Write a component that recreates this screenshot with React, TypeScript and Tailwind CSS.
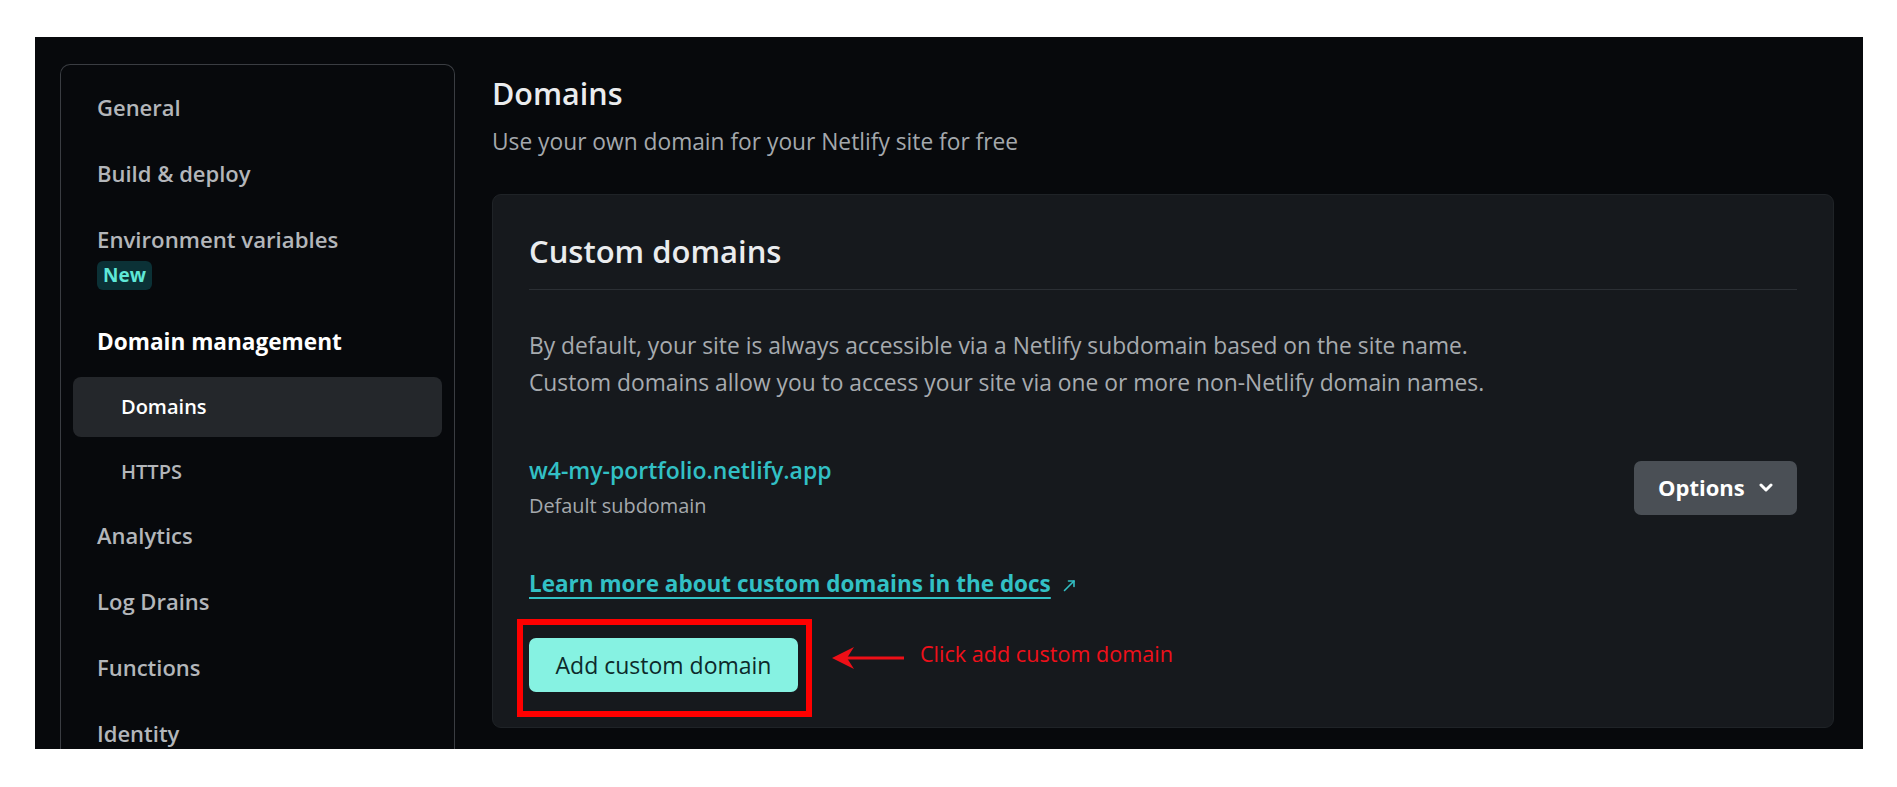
import React from 'react'

const navTop = ['General', 'Build & deploy']
const navBottom = ['Analytics', 'Log Drains', 'Functions', 'Identity']

function Chevron() {
  return (
    <svg width="14" height="9" viewBox="0 0 14 9" fill="none" className="shrink-0">
      <polyline points="2,2 7,7 12,2" stroke="#ffffff" strokeWidth="3" strokeLinecap="round" strokeLinejoin="round" />
    </svg>
  )
}

function ExternalArrow() {
  return (
    <svg width="13" height="13" viewBox="0 0 13 13" fill="none" className="ml-[12px] mt-[2px]">
      <line x1="1.5" y1="11.5" x2="11" y2="2" stroke="#32c0c5" strokeWidth="1.6" strokeLinecap="round" />
      <polyline points="5.5,2 11,2 11,7.5" stroke="#32c0c5" strokeWidth="1.6" strokeLinecap="round" strokeLinejoin="round" />
    </svg>
  )
}

function RedArrow() {
  return (
    <svg width="72" height="24" viewBox="0 0 72 24" className="mt-[8px] ml-[34px] shrink-0">
      <line x1="14" y1="12" x2="72" y2="12" stroke="#ee0f17" strokeWidth="3.2" />
      <polygon points="0,12 22,1 15,12 22,23" fill="#ee0f17" />
    </svg>
  )
}

export default function App() {
  return (
    <div className="w-[1897px] h-[787px] bg-white pt-[37px] font-['Open_Sans',sans-serif]">
      <div className="ml-[35px] mr-[34px] h-[712px] bg-[#07090c] overflow-hidden flex">
        {/* sidebar */}
        <div className="ml-[25px] mt-[27px] w-[395px] shrink-0 border border-b-0 border-[#3a3d42] rounded-t-[10px] pt-[9px] px-[12px]">
          {navTop.map((item) => (
            <div key={item} className="pl-[24px] py-[17px] leading-[32px] text-[22px] font-semibold text-[#b3b6ba]">
              {item}
            </div>
          ))}
          <div className="pl-[24px] pt-[18px] pb-[17px]">
            <div className="leading-[32px] text-[22.2px] font-semibold text-[#b3b6ba]">Environment variables</div>
            <span className="mt-[5px] inline-block h-[29px] rounded-[6px] bg-[#0b3136] px-[6px] leading-[29px] text-[19px] font-bold text-[#5fe8d8]">
              New
            </span>
          </div>
          <div className="pl-[24px] pt-[19px] leading-[32px] text-[22.6px] font-bold text-white">Domain management</div>
          <div className="mt-[19px] h-[60px] rounded-[8px] bg-[#24272b] pl-[48px] leading-[60px] text-[20px] font-semibold text-white">
            Domains
          </div>
          <div className="mt-[5px] pl-[48px] leading-[60px] text-[20px] font-semibold text-[#b3b6ba]">HTTPS</div>
          <div>
            {navBottom.map((item) => (
              <div key={item} className="pl-[24px] py-[17px] leading-[32px] text-[22px] font-semibold text-[#b3b6ba]">
                {item}
              </div>
            ))}
          </div>
        </div>

        {/* main */}
        <div className="ml-[37px] mr-[29px] flex-1 pt-[36px]">
          <h1 className="leading-[40px] text-[30.5px] font-semibold text-[#eaecee]">Domains</h1>
          <p className="mt-[13px] leading-[32px] text-[22.75px] text-[#a4a8ac]">Use your own domain for your Netlify site for free</p>

          <div className="mt-[36px] rounded-[9px] border border-[#1f2327] bg-[#16191d] px-[36px] pt-[36px] pb-[35px]">
            <div className="border-b border-[#2b2f34] pb-[18px]">
              <h2 className="leading-[40px] text-[31px] font-semibold text-[#eaecee]">Custom domains</h2>
            </div>

            <p className="mt-[37px] leading-[37px] text-[22.8px] text-[#a7abaf]">
              By default, your site is always accessible via a Netlify subdomain based on the site name.
              <br />
              Custom domains allow you to access your site via one or more non-Netlify domain names.
            </p>

            <div className="mt-[54px] flex items-center justify-between">
              <div>
                <div className="leading-[30px] text-[23px] font-semibold text-[#32c0c5]">w4-my-portfolio.netlify.app</div>
                <div className="mt-[7px] leading-[28px] text-[19.9px] text-[#a5a9ad]">Default subdomain</div>
              </div>
              <button className="flex h-[54px] w-[163px] items-center gap-[14px] rounded-[7px] bg-[#4a4f55] pl-[24px] text-[22px] font-bold text-white">
                Options
                <Chevron />
              </button>
            </div>

            <div className="mt-[49px] flex items-center">
              <a className="leading-[30px] text-[22.5px] font-bold text-[#32c0c5] underline decoration-2 underline-offset-[5px]">
                Learn more about custom domains in the docs
              </a>
              <ExternalArrow />
            </div>

            <div className="mt-[39px] flex items-start">
              <div className="relative">
                <button className="h-[54px] w-[269px] rounded-[7px] bg-[#86f2e2] text-[23px] font-medium text-[#0c2a2b]">
                  Add custom domain
                </button>
                <div className="absolute -left-[12px] -top-[19px] -right-[14px] -bottom-[25px] border-[6px] border-[#ff0000]" />
              </div>
              <RedArrow />
              <span className="ml-[16px] mt-[2px] leading-[28px] text-[21.6px] text-[#f0101a]">
                Click add custom domain
              </span>
            </div>
          </div>
        </div>
      </div>
    </div>
  )
}
